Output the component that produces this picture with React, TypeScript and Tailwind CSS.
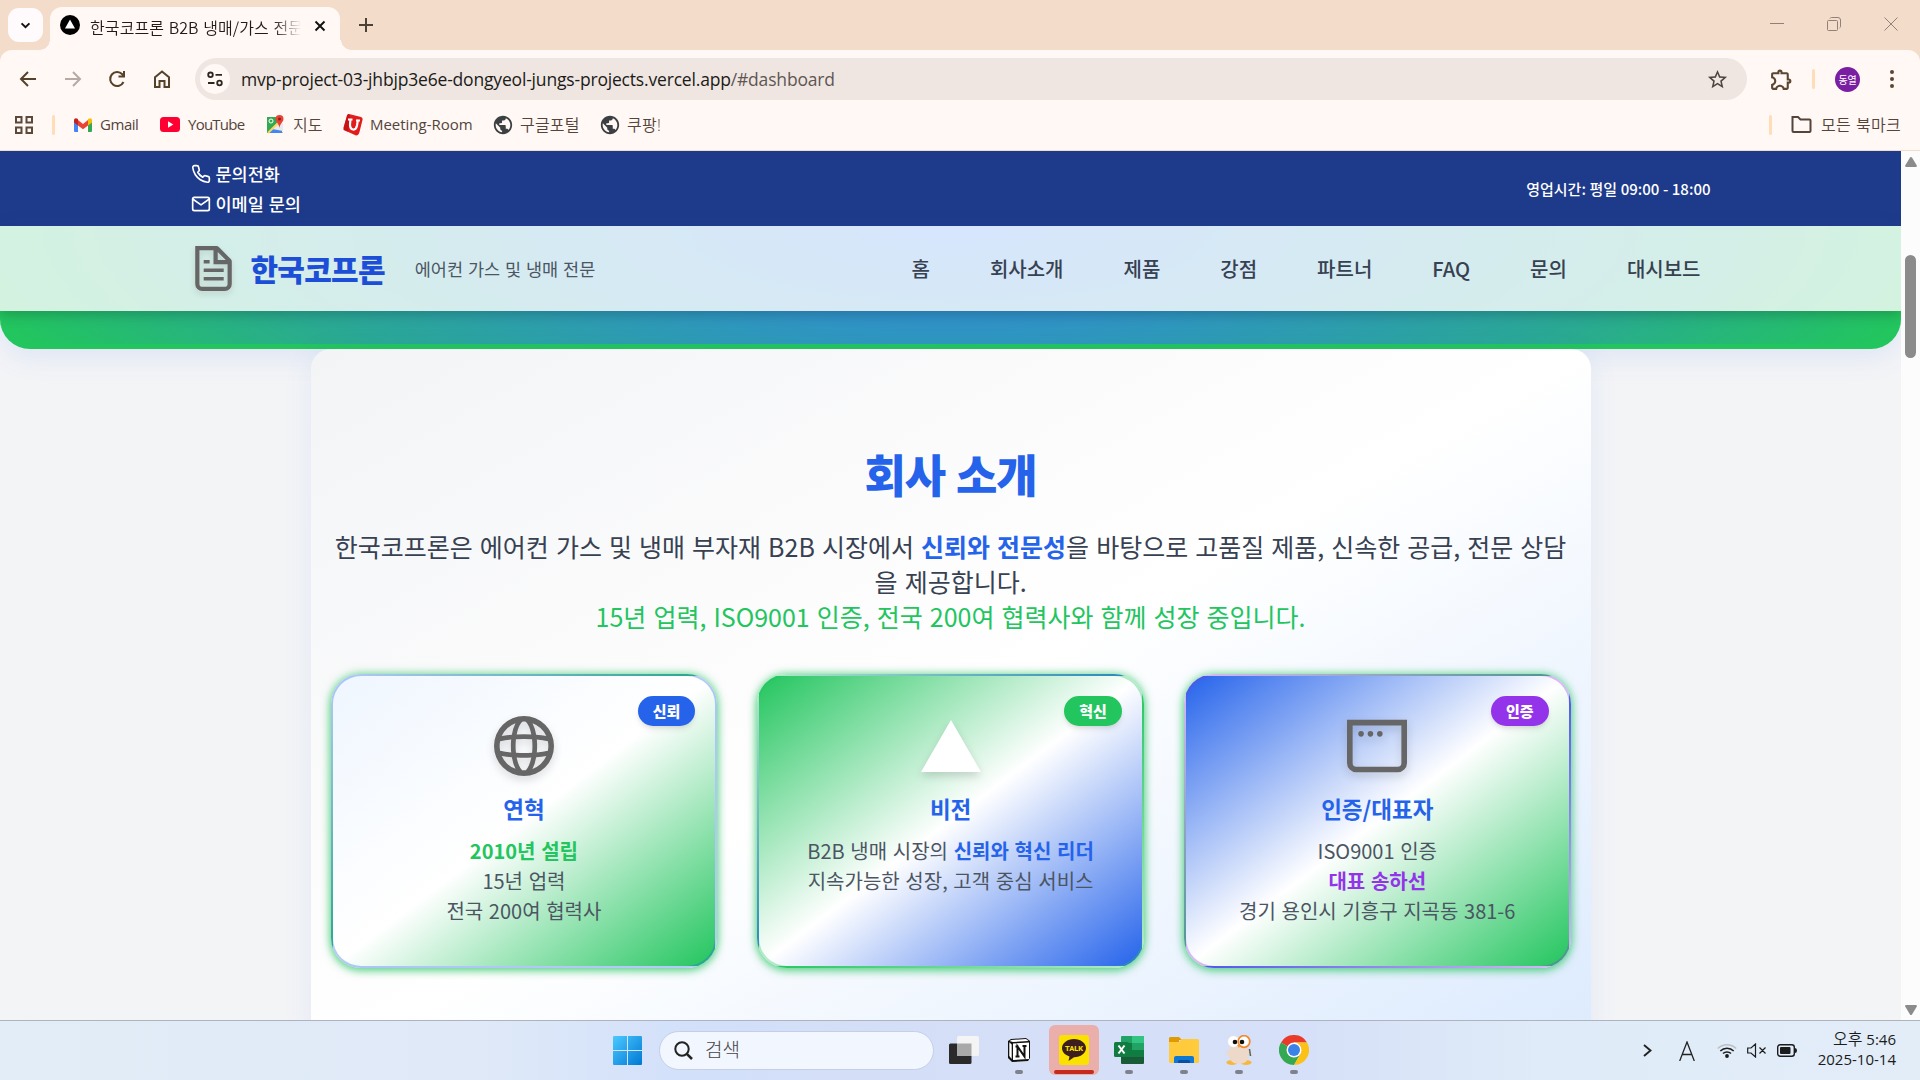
import React from "react";
import { FiMail, FiPhone } from "react-icons/fi";
import { MdOutlineExtension, MdPublic, MdStarBorder } from "react-icons/md";

function FileIcon() {
  return (
    <svg viewBox="0 0 16 16" className="size-[45px] drop-shadow-md">
      <path
        d="M14.5 13.5V5.41a1 1 0 0 0-.3-.7L9.8.29A1 1 0 0 0 9.08 0H1.5v13.5A2.5 2.5 0 0 0 4 16h8a2.5 2.5 0 0 0 2.5-2.5m-1.5 0v-7H8v-5H3v12a1 1 0 0 0 1 1h8a1 1 0 0 0 1-1M9.5 5V2.12L12.38 5zM5.13 5h-.62v1.25h2.12V5zm-.62 3h7.12v1.25H4.5zm.62 3h-.62v1.25h7.12V11z"
        fill="#666"
        fillRule="evenodd"
      />
    </svg>
  );
}

function GlobeIcon() {
  return (
    <svg viewBox="0 0 16 16" className="size-[60px] overflow-visible drop-shadow-lg">
      <path
        fillRule="evenodd"
        d="M10.27 14.1a6.5 6.5 0 0 0 3.67-3.45q-1.24.21-2.7.34-.31 1.83-.97 3.1M8 16A8 8 0 1 0 8 0a8 8 0 0 0 0 16m.48-1.52a7 7 0 0 1-.96 0H7.5a4 4 0 0 1-.84-1.32q-.38-.89-.63-2.08a40 40 0 0 0 3.92 0q-.25 1.2-.63 2.08a4 4 0 0 1-.84 1.31zm2.94-4.76q1.66-.15 2.95-.43a7 7 0 0 0 0-2.58q-1.3-.27-2.95-.43a18 18 0 0 1 0 3.44m-1.27-3.54a17 17 0 0 1 0 3.64 39 39 0 0 1-4.3 0 17 17 0 0 1 0-3.64 39 39 0 0 1 4.3 0m1.1-1.17q1.45.13 2.69.34a6.5 6.5 0 0 0-3.67-3.44q.65 1.26.98 3.1M8.48 1.5l.01.02q.41.37.84 1.31.38.89.63 2.08a40 40 0 0 0-3.92 0q.25-1.2.63-2.08a4 4 0 0 1 .85-1.32 7 7 0 0 1 .96 0m-2.75.4a6.5 6.5 0 0 0-3.67 3.44 29 29 0 0 1 2.7-.34q.31-1.83.97-3.1M4.58 6.28q-1.66.16-2.95.43a7 7 0 0 0 0 2.58q1.3.27 2.95.43a18 18 0 0 1 0-3.44m.17 4.71q-1.45-.12-2.69-.34a6.5 6.5 0 0 0 3.67 3.44q-.65-1.27-.98-3.1"
        fill="#666"
      />
    </svg>
  );
}

function TriangleIcon() {
  return (
    <svg viewBox="0 0 1155 1000" className="size-[60px] overflow-visible drop-shadow-lg">
      <path d="m577.3 0 577.4 1000H0z" fill="#fff" />
    </svg>
  );
}

function WindowIcon() {
  return (
    <svg viewBox="0 0 16 16" className="size-[60px] overflow-visible drop-shadow-lg">
      <path
        fillRule="evenodd"
        d="M1.5 2.5h13v10a1 1 0 0 1-1 1h-11a1 1 0 0 1-1-1zM0 1h16v11.5a2.5 2.5 0 0 1-2.5 2.5h-11A2.5 2.5 0 0 1 0 12.5zm3.75 4.5a.75.75 0 1 0 0-1.5.75.75 0 0 0 0 1.5M7 4.75a.75.75 0 1 1-1.5 0 .75.75 0 0 1 1.5 0m1.75.75a.75.75 0 1 0 0-1.5.75.75 0 0 0 0 1.5"
        fill="#666"
      />
    </svg>
  );
}

function TabStrip() {
  return (
    <div className="flex h-[50px] bg-[#f4dccb] text-[#241915]">
      <div className="mt-2 ml-2 flex h-[34px] w-[35px] items-center justify-center rounded-[11px] bg-[#fffbfd]">
        <svg viewBox="0 0 12 8" className="h-[7px] w-[11px]" fill="none" stroke="#111" strokeWidth="2.2">
          <path d="M1.5 1.5 6 6l4.500-4.500" />
        </svg>
      </div>
      <div className="mt-[40px] -mr-px ml-[-3px] h-[10px] w-[11px] bg-[radial-gradient(circle_at_0_0,transparent_9.500px,#fff8f5_10px)]" />
      <div className="mt-[7px] flex h-[43px] w-[290px] items-center rounded-t-[12px] bg-[#fff8f5] pl-[10px]">
        <svg viewBox="0 0 20 20" className="mt-[-7px] size-5">
          <circle cx="10" cy="10" r="10" fill="#000" />
          <path d="m10 4.500 5 9H5z" fill="#fff" />
        </svg>
        <div className="mt-[-4px] ml-[10px] w-[211px] overflow-hidden text-[16px] leading-6 font-[350] tracking-[0.100px] whitespace-nowrap [mask-image:linear-gradient(to_right,#000_87%,transparent)] [word-spacing:0.9px]">
          한국코프론 B2B 냉매/가스 전문
        </div>
        <svg viewBox="0 0 12 12" className="mt-[-6px] ml-[13px] size-3" stroke="#111" strokeWidth="1.900">
          <path d="m1.500 1.500 9 9m0-9-9 9" />
        </svg>
      </div>
      <div className="mt-[40px] h-[10px] w-[11px] bg-[radial-gradient(circle_at_100%_0,transparent_9.500px,#fff8f5_10px)]" />
      <svg viewBox="0 0 14 14" className="mt-[18px] ml-[8px] size-[14px]" stroke="#4a4237" strokeWidth="2">
        <path d="M7 0v14M0 7h14" />
      </svg>
      <div className="mt-[17px] mr-[22px] ml-auto flex gap-[43px]">
        <svg viewBox="0 0 14 14" className="size-[14px]" stroke="#8f8178">
          <path d="M0 6.500h14" />
        </svg>
        <svg viewBox="0 0 14 14" className="size-[14px]" fill="none" stroke="#8f8178">
          <rect x=".5" y="3.500" width="10" height="10" rx="1" />
          <path d="M3 1.500q.4-1 1.500-1H11q2.500 0 2.500 2.500v6.500q0 1-1 1.500" />
        </svg>
        <svg viewBox="0 0 14 14" className="size-[14px]" stroke="#8f8178">
          <path d="m.5 .5 13 13m0-13-13 13" />
        </svg>
      </div>
    </div>
  );
}

function Toolbar() {
  return (
    <div className="bg-[#f4dccb]">
      <div className="flex h-[58px] items-center rounded-t-[12px] bg-[#fff8f5] pl-[19px] text-[#5b4632]">
        <svg viewBox="0 0 18 18" className="size-[18px]" fill="none" stroke="#564229" strokeWidth="2">
          <path d="M17 9H2m7-7L2 9l7 7" />
        </svg>
        <svg viewBox="0 0 18 18" className="ml-[27px] size-[18px]" fill="none" stroke="#b5aaa5" strokeWidth="2">
          <path d="M1 9h15M9 2l7 7-7 7" />
        </svg>
        <svg viewBox="0 0 18 18" className="ml-[26px] size-[18px]" fill="none" stroke="#564229" strokeWidth="2">
          <path d="M15.500 12a7 7 0 1 1-1.200-7.800L16 6M16 1v5.500h-5.500" />
        </svg>
        <svg viewBox="0 0 18 18" className="ml-[27px] size-[18px]" fill="none" stroke="#564229" strokeWidth="2">
          <path d="M2 7.200 9 1.500l7 5.700V17h-4.500v-6h-5v6H2z" />
        </svg>
        <div className="ml-[24px] flex h-[42px] w-[1552px] items-center rounded-full bg-[#efe6e2] pl-[5px]">
          <div className="flex size-[30px] items-center justify-center rounded-full bg-[#fff8f5]">
            <svg viewBox="0 0 16 16" className="size-4" fill="none" stroke="#2d2520" strokeWidth="1.800">
              <circle cx="3.500" cy="3.800" r="2.300" />
              <path d="M8.500 3.800H15M1 12h6.500" />
              <circle cx="12.500" cy="12" r="2.300" />
            </svg>
          </div>
          <div className="ml-[11px] text-[17.500px] whitespace-nowrap text-[#201a17] [font-family:'Open_Sans','Noto_Sans',sans-serif]">
            <span className="inline-block w-[594px] tracking-[-0.180px]">
              mvp-project-03-jhbjp3e6e-dongyeol-jungs-projects.vercel.app<span className="text-[#5f5652]">/#dashboard</span>
            </span>
          </div>
          <MdStarBorder className="mr-[18px] ml-auto size-[23px] text-[#4d4440]" />
        </div>
        <MdOutlineExtension className="ml-[22px] size-[25px] text-[#5b4632]" />
        <div className="ml-[18px] h-5 w-[3px] rounded bg-[#ffddb8]" />
        <div className="ml-[20px] flex size-[25px] items-center justify-center rounded-full bg-[#7b1fa2] text-[10px] tracking-tight text-white">
          동열
        </div>
        <svg viewBox="0 0 4 18" className="ml-[30px] h-[18px] w-1" fill="#5b4632">
          <circle cx="2" cy="2" r="2" />
          <circle cx="2" cy="9" r="2" />
          <circle cx="2" cy="16" r="2" />
        </svg>
      </div>
    </div>
  );
}

function BookmarkBar() {
  return (
    <div className="flex h-[43px] items-center border-b border-[#f4dccb] bg-[#fff8f5] pb-[9px] text-[15px] whitespace-nowrap text-[#54443a] [font-family:'Open_Sans','Noto_Sans_CJK_KR',sans-serif]">
      <svg viewBox="0 0 18 18" className="ml-[15px] size-[18px]" fill="none" stroke="#5b4a3c" strokeWidth="2">
        <path d="M1 1h5.500v5.500H1zM11.500 1H17v5.500h-5.500zM1 11.500h5.500V17H1zM11.500 11.500H17V17h-5.500z" />
      </svg>
      <div className="ml-[19px] h-5 w-[3px] rounded bg-[#ffddb8]" />
      <svg viewBox="0 0 18 14" className="ml-[19px] h-[14px] w-[18px]">
        <path d="M0 2v11q0 1 1 1h3V5z" fill="#4285f4" />
        <path d="M18 2v11q0 1-1 1h-3V5z" fill="#34a853" />
        <path d="m14 2-5 4-5-4v5.500l5 3.800 5-3.800z" fill="#ea4335" />
        <path d="M0 2.200C0 .3 2 -.5 3.500.8L4 1.300v6.200L0 4.500z" fill="#c5221f" />
        <path d="M18 2.200C18 .3 16-.5 14.500.8l-.5.500v6.200l4-3z" fill="#fbbc04" />
      </svg>
      <span className="ml-[8px] w-[40px] tracking-[-0.450px]">Gmail</span>
      <svg viewBox="0 0 20 15" className="ml-[20px] h-[15px] w-5">
        <rect width="20" height="15" rx="3.500" fill="#ff0033" />
        <path d="m8 4.300 5.300 3.200L8 10.700z" fill="#fff" />
      </svg>
      <span className="ml-[8px] w-[58px] tracking-[-0.750px]">YouTube</span>
      <svg viewBox="0 0 20 20" className="ml-[19px] size-5">
        <path d="M2 2h15v16H2z" fill="#34a853" />
        <path d="m4 18 7-7 7 7z" fill="#4285f4" />
        <path d="m7 14 8-8 3 3v7z" fill="#e8eaed" />
        <path d="M3 18 17 4" stroke="#fdd663" strokeWidth="2" />
        <circle cx="6" cy="6" r="2" fill="none" stroke="#fff" />
        <path d="M14.500 0a4 4 0 0 0-4 4c0 3 3.300 4 4 9 .7-5 4-6 4-9a4 4 0 0 0-4-4" fill="#ea4335" />
        <circle cx="14.500" cy="4" r="1.500" fill="#8c1d18" />
      </svg>
      <span className="ml-[8px] w-[30px] text-[16px] font-[350]">지도</span>
      <svg viewBox="0 0 20 24" className="ml-[20px] h-6 w-5">
        <path d="M6 1 18 4q2 .6 1.600 2.600L16.500 19q-1 3.500-3.500 3.500L2 17.500Q0 17 .6 14.500L4 2.500Q4.500.7 6 1" fill="#e21b1b" />
        <path d="M6 1Q4.500.7 4 2.500L.6 14.500Q0 17 2 17.500L5 18.900 7 5z" fill="#b60f12" opacity=".6" />
        <path d="M7.500 6 7 11.500q0 4.500 3 5t4-4l1-6M5 6.500h4.500M13 7.500h4" fill="none" stroke="#fff" strokeWidth="2.200" />
      </svg>
      <span className="ml-[7px] w-[102px] tracking-[-0.020px]">Meeting-Room</span>
      <MdPublic className="ml-[20px] size-[22px] text-[#3c4043]" />
      <span className="ml-[6px] w-[60px] text-[16px] font-[350] tracking-[0.200px]">구글포털</span>
      <MdPublic className="ml-[19px] size-[22px] text-[#3c4043]" />
      <span className="ml-[6px] text-[16px] font-[350] tracking-[0.300px]">쿠팡!</span>
      <div className="ml-auto h-5 w-[3px] rounded bg-[#ffddb8]" />
      <svg viewBox="0 0 21 17" className="ml-[19px] h-[17px] w-[21px]" fill="none" stroke="#54443a" strokeWidth="2">
        <path d="M1.500 1H7l2.500 2.500h9q1 0 1 1v10.500q0 1-1 1h-16q-1 0-1-1z" />
      </svg>
      <span className="mr-[17px] ml-[9px] w-[82px] text-[16px] font-[350] tracking-[0.200px] [word-spacing:0.9px]">모든 북마크</span>
    </div>
  );
}

const navItems = ["홈", "회사소개", "제품", "강점", "파트너", "FAQ", "문의", "대시보드"];

function SiteHeader() {
  return (
    <header>
      <div className="h-[75px] bg-[#1e3a8a] text-white">
        <div className="mx-auto flex h-full w-[1520px] items-center justify-between font-medium">
          <div className="text-[17.500px] leading-[30px] [word-spacing:0.058em]">
            <div className="flex items-center gap-[5px]">
              <FiPhone className="size-5" />
              문의전화
            </div>
            <div className="flex items-center gap-[5px]">
              <FiMail className="size-5" />
              이메일 문의
            </div>
          </div>
          <div className="pt-px text-[15px] [word-spacing:0.2px]">영업시간: 평일 09:00 - 18:00</div>
        </div>
      </div>
      <div className="h-[123px] overflow-clip rounded-b-[30px] border-b-[5px] border-[#22c55e] bg-[radial-gradient(1050px_300px_at_50%_0,#357ff6,#2aa993_68%,#22c55e_96%)] shadow-[0_8px_28px_rgba(37,99,235,0.100)]">
        <div className="h-[85px] bg-white/80 shadow-[0_4px_12px_rgba(0,0,0,0.200)]">
          <div className="mx-auto flex h-full w-[1520px] items-center">
            <FileIcon />
            <span className="ml-[15px] text-[30px] font-extrabold tracking-tight text-[#1d4ed8]">한국코프론</span>
            <span className="ml-[30px] pt-px text-[17.500px] text-[#4b5563] [word-spacing:0.055em]">에어컨 가스 및 냉매 전문</span>
            <nav className="ml-auto flex gap-10 pt-px text-[20px] font-medium text-[#374151]">
              {navItems.map((n) => (
                <a key={n} className="px-[10px]">
                  {n}
                </a>
              ))}
            </nav>
          </div>
        </div>
      </div>
    </header>
  );
}

function Card(p: { box: string; badge: string; label: string; icon: React.ReactNode; title: string; children: React.ReactNode }) {
  return (
    <div
      className={
        "relative flex h-[294px] flex-col items-center rounded-[30px] border-2 pt-10 shadow-[0_0_10px_rgba(34,197,94,0.600),0_3px_8px_rgba(34,197,94,0.500)] " +
        p.box
      }
    >
      <span className={"absolute top-5 right-5 rounded-full px-[15px] py-[5px] text-[15px] leading-5 font-extrabold text-white shadow-md " + p.badge}>
        {p.label}
      </span>
      {p.icon}
      <h3 className="mt-[15px] text-[22.500px] leading-[35px] font-bold text-[#2563eb]">{p.title}</h3>
      <p className="mt-[10px] text-center text-[20px] leading-[30px] text-[#4b5563] [word-spacing:0.058em]">{p.children}</p>
    </div>
  );
}

function Company() {
  return (
    <section className="ml-[310.600px] h-[719px] w-[1280px] rounded-[20px] bg-[linear-gradient(to_bottom_right,#f3f4f6,#fff,#dbeafe)] px-5 pt-[100px] shadow-[0_4px_30px_rgba(37,99,235,0.080)]">
      <h2 className="text-center text-[45px] leading-[50px] font-extrabold tracking-tight text-[#2563eb] [word-spacing:0.040em]">회사 소개</h2>
      <p className="mt-[30px] text-center text-[25px] leading-[35px] whitespace-nowrap text-[#374151] [word-spacing:0.058em]">
        한국코프론은 에어컨 가스 및 냉매 부자재 B2B 시장에서 <b className="font-bold text-[#2563eb]">신뢰와 전문성</b>을 바탕으로 고품질 제품, 신속한 공급, 전문 상담
        <br />
        을 제공합니다.
        <br />
        <span className="text-[#22c55e]">15년 업력, ISO9001 인증, 전국 200여 협력사와 함께 성장 중입니다.</span>
      </p>
      <div className="mt-10 grid grid-cols-3 gap-10">
        <Card
          box="border-[#2563eb55] bg-[linear-gradient(to_bottom_right,#eff6ff,#fff,#22c55e)]"
          badge="bg-[#2563eb]"
          label="신뢰"
          icon={<GlobeIcon />}
          title="연혁"
        >
          <b className="font-bold text-[#22c55e]">2010년 설립</b>
          <br />
          15년 업력
          <br />
          전국 200여 협력사
        </Card>
        <Card
          box="border-[#22c55e55] bg-[linear-gradient(to_bottom_right,#22c55e,#fff,#2563eb)]"
          badge="bg-[#22c55e]"
          label="혁신"
          icon={<TriangleIcon />}
          title="비전"
        >
          B2B 냉매 시장의 <b className="font-bold text-[#2563eb]">신뢰와 혁신 리더</b>
          <br />
          지속가능한 성장, 고객 중심 서비스
        </Card>
        <Card
          box="border-[#9333ea55] bg-[linear-gradient(to_bottom_right,#2563eb,#fff,#22c55e)]"
          badge="bg-[#9333ea]"
          label="인증"
          icon={<WindowIcon />}
          title="인증/대표자"
        >
          ISO9001 인증
          <br />
          <b className="font-bold text-[#9333ea]">대표 송하선</b>
          <br />
          경기 용인시 기흥구 지곡동 381-6
        </Card>
      </div>
    </section>
  );
}

function Scrollbar() {
  return (
    <div className="flex w-[19px] flex-col items-center bg-[#fcfcfc]">
      <svg viewBox="0 0 12 10" className="mt-[6px] h-[10px] w-3" fill="#8b8b8b">
        <path d="M6 0q.6 0 1 .6l4.800 7.800q.4 1.600-1 1.600H1.200q-1.400 0-1-1.600L5 .6Q5.400 0 6 0" />
      </svg>
      <div className="mt-[88px] h-[103px] w-[11px] rounded-full bg-[#8b8b8b]" />
      <svg viewBox="0 0 12 10" className="mt-auto mb-[5px] h-[10px] w-3 rotate-180" fill="#8b8b8b">
        <path d="M6 0q.6 0 1 .6l4.800 7.800q.4 1.600-1 1.600H1.200q-1.400 0-1-1.600L5 .6Q5.400 0 6 0" />
      </svg>
    </div>
  );
}

function TaskSlot({ children, active, dot = true }: { children: React.ReactNode; active?: boolean; dot?: boolean }) {
  return (
    <div className="flex w-[55px] flex-col items-center">
      <div className={"flex h-[50px] w-[50px] flex-col items-center rounded-[6px] " + (active ? "bg-[#ebafab]" : "")}>
        <div className="flex h-[45px] items-center pt-[5px]">{children}</div>
        {dot && <div className={"h-1 rounded-full " + (active ? "w-10 bg-[#c42b1c]" : "w-2 bg-[#7d828c]")} />}
      </div>
    </div>
  );
}

function Taskbar() {
  return (
    <footer className="flex h-[60px] border-t border-[#aeb4bf] bg-[linear-gradient(to_right,#e2edf7,#dfe9f8_25%,#d2e0fa_36%,#d5def7_45%,#d6e0f8_68%,#dfebf8_80%,#e2edf8)] pt-1">
      <svg viewBox="0 0 29 29" className="mt-[11px] ml-[613px] size-[29px]">
        <defs>
          <linearGradient id="win" x1="0" y1="0" x2="1" y2="1">
            <stop offset="0" stopColor="#4cc9ff" />
            <stop offset="1" stopColor="#0078d4" />
          </linearGradient>
        </defs>
        <path d="M1 0h13v14H0V1q0-1 1-1m14 0h13q1 0 1 1v13H15zM0 15h14v14H1q-1 0-1-1zm15 0h14v13q0 1-1 1H15z" fill="url(#win)" />
      </svg>
      <div className="mt-[6px] ml-[17px] flex h-[39px] w-[275px] items-center rounded-full border border-[#c3cfe6] bg-[#f2f6fe] pb-px pl-[14px] text-[19px] font-light text-[#444]">
        <svg viewBox="0 0 19 19" className="size-[19px]" fill="none" stroke="#222" strokeWidth="2">
          <circle cx="8" cy="8" r="6.700" />
          <path d="m12.800 12.800 5.200 5.200" strokeWidth="2.500" />
        </svg>
        <span className="mt-[-2px] ml-[12px]">검색</span>
      </div>
      <div className="ml-[2px] flex">
        <TaskSlot dot={false}>
          <svg viewBox="0 0 30 28" className="h-[28px] w-[30px]">
            <rect y="7.500" width="22.500" height="20.500" rx="1.500" fill="#2a2a2a" />
            <rect x="8" width="22" height="20" rx="1.500" fill="#f4f4f4" />
            <path d="M8 7.500h14.500V20H9.500Q8 20 8 18.500z" fill="#a9a9a9" />
          </svg>
        </TaskSlot>
        <TaskSlot>
          <svg viewBox="0 0 24 24" className="size-[24px]">
            <path d="m1 3 3-2 15-1 4 3v17l-2 3-16 1-4-4z" fill="#111" />
            <path d="m2.500 3 2-1L19 1l2.500 2L6 4z" fill="#fff" />
            <path d="M6 5.500 22 4.500v16.500L6 22z" fill="#fff" />
            <path d="M2.300 4.300 4.700 6.500v14.500l-2.400-3z" fill="#fff" />
            <path d="M10.500 18.500v-10l7 10v-10.500M8.500 8.500h3M15.500 8h4M8.500 18.500h4" fill="none" stroke="#111" strokeWidth="2" />
          </svg>
        </TaskSlot>
        <TaskSlot active>
          <div className="flex size-[30px] items-center justify-center rounded-[3px] bg-[#fae100]">
            <svg viewBox="0 0 24 22" className="h-[22px] w-6">
              <path d="M12 0c6.600 0 12 4 12 9s-5.400 9.300-12 9.300L6.500 22l1-4.500C3 16 0 12.900 0 9c0-5 5.400-9 12-9" fill="#3c1e1e" />
              <text x="12" y="12" textAnchor="middle" fontSize="7.500" fontWeight="800" fill="#fae100" fontFamily="Roboto, sans-serif">
                TALK
              </text>
            </svg>
          </div>
        </TaskSlot>
        <TaskSlot>
          <svg viewBox="0 0 30 28" className="h-[28px] w-[30px]">
            <path d="M8 0h21q1 0 1 1v6H7V1q0-1 1-1" fill="#21a366" />
            <path d="M18 0h11q1 0 1 1v6H18z" fill="#33c481" />
            <path d="M7 7h11v14H7z" fill="#107c41" />
            <path d="M18 7h12v7H18z" fill="#21a366" />
            <path d="M18 14h12v7H18z" fill="#107c41" />
            <path d="M7 21h23v6q0 1-1 1H8q-1 0-1-1z" fill="#185c37" />
            <rect y="6" width="15" height="15" rx="1.500" fill="#107c41" />
            <path d="m4.500 9.500 6 8m0-8-6 8" stroke="#fff" strokeWidth="2" />
          </svg>
        </TaskSlot>
        <TaskSlot>
          <svg viewBox="0 0 30 26" className="h-[26px] w-[30px]">
            <path d="M1.500 0H10l3 3h-3v6H0V1.500Q0 0 1.500 0" fill="#e09a00" />
            <path d="M0 5h10l3-3h15.500Q30 2 30 3.500V24.500Q30 26 28.500 26h-27Q0 26 0 24.500z" fill="#ffcb3d" />
            <path d="M5 26v-5q0-2 2-2h16q2 0 2 2v5z" fill="#0f78d4" />
            <path d="M9 26v-1.500q0-1.500 1.500-1.500h9q1.500 0 1.500 1.500V26z" fill="#0a4f9c" />
          </svg>
        </TaskSlot>
        <TaskSlot>
          <svg viewBox="0 0 28 30" className="h-[30px] w-[28px]">
            <ellipse cx="7" cy="27.500" rx="5.500" ry="2.500" fill="#f5b83d" />
            <ellipse cx="21" cy="27.500" rx="5.500" ry="2.500" fill="#f5b83d" />
            <path d="M7 8C6 13 2 15 1 21l3-1c0 5 4 9 10 9s10-4 10-9l3 1c-1-6-5-8-6-13z" fill="#ecd9c9" />
            <circle cx="8.500" cy="6.500" r="5.800" fill="#fff" stroke="#ddd" strokeWidth=".5" />
            <circle cx="10" cy="7" r="2.300" fill="#111" />
            <circle cx="19" cy="6.500" r="5.800" fill="#fff" stroke="#f0892b" strokeWidth="1.800" />
            <circle cx="17" cy="7" r="2.300" fill="#111" />
            <path d="m12 10 2 3 2-3z" fill="#e8a23a" />
            <path d="m24.500 14 1 7" stroke="#566" strokeWidth="1.500" />
          </svg>
        </TaskSlot>
        <TaskSlot>
          <svg viewBox="0 0 30 30" className="size-[30px]">
            <path d="M15 15 2 7.500A15 15 0 0 1 28 7.500H15z" fill="#ea3a2c" />
            <path d="M2 7.500A15 15 0 0 0 15 30l6.500-11.200L15 15z" fill="#34a853" />
            <path d="M28 7.500H15L21.500 18.800 15 30A15 15 0 0 0 28 7.500" fill="#fbc116" />
            <circle cx="15" cy="15" r="7.500" fill="#fff" />
            <circle cx="15" cy="15" r="6" fill="#3b82e8" />
          </svg>
        </TaskSlot>
      </div>
      <div className="mr-[24px] ml-auto flex h-[51px] items-center text-[#1c1c1c]">
        <svg viewBox="0 0 9 13" className="h-[13px] w-[9px]" fill="none" stroke="#222" strokeWidth="1.900">
          <path d="m1 1 6.500 5.500L1 12" />
        </svg>
        <svg viewBox="0 0 16 20" className="ml-[27px] h-5 w-4" fill="none" stroke="#222" strokeWidth="1.300">
          <path d="M.7 20 8 1l7.300 19M3.500 13.500h9" />
        </svg>
        <svg viewBox="0 0 20 15" className="ml-[22px] h-[15px] w-5" fill="none" strokeWidth="1.500">
          <path d="M.8 5.500a13 13 0 0 1 18.400 0" stroke="#b8c0c8" />
          <path d="M3.300 8a9.500 9.500 0 0 1 13.400 0M6 10.600a5.600 5.600 0 0 1 8 0" stroke="#1c1c1c" />
          <circle cx="10" cy="13" r="1.900" fill="#1c1c1c" />
        </svg>
        <svg viewBox="0 0 20 15" className="ml-[10px] h-[15px] w-5" fill="none" stroke="#1c1c1c" strokeWidth="1.200">
          <path d="M.7 5v5H4l4.500 4V1L4 5zM12.500 4.500l6 6m0-6-6 6" />
        </svg>
        <svg viewBox="0 0 20 13" className="ml-[10px] h-[13px] w-5">
          <rect x=".7" y=".7" width="16.600" height="11.600" rx="2.500" fill="none" stroke="#1c1c1c" strokeWidth="1.400" />
          <rect x="3" y="3" width="10.500" height="7" rx="1" fill="#1c1c1c" />
          <path d="M18 4q2 0 2 2.500T18 9z" fill="#1c1c1c" />
        </svg>
        <div className="ml-[20px] w-[79px] pb-[3px] text-right text-[15px] leading-5 whitespace-nowrap [font-family:'Open_Sans','Noto_Sans_CJK_KR',sans-serif]">
          <div>
            <span className="text-[16px] font-[350]">오후</span> 5:46
          </div>
          <div>2025-10-14</div>
        </div>
      </div>
    </footer>
  );
}

export default function App() {
  return (
    <div className="flex h-[1080px] w-[1920px] flex-col overflow-hidden [font-family:'Noto_Sans_CJK_KR','Noto_Sans',sans-serif]">
      <TabStrip />
      <Toolbar />
      <BookmarkBar />
      <div className="flex min-h-0 flex-1">
        <main className="w-[1901px] overflow-hidden bg-[#f3f4f6]">
          <SiteHeader />
          <Company />
        </main>
        <Scrollbar />
      </div>
      <Taskbar />
    </div>
  );
}
